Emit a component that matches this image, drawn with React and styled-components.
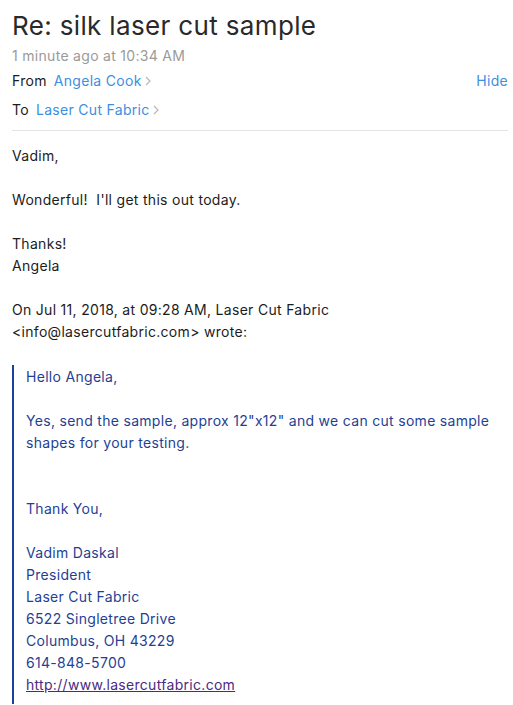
import React from 'react';
import styled, { createGlobalStyle } from 'styled-components';

const GlobalStyle = createGlobalStyle`
    body {
        margin: 0;
        background: #ffffff;
        font-family: Inter, "Helvetica Neue", "Liberation Sans", sans-serif;
    }
`;

const Page = styled.div`
    padding: 8px 5px 0 12px;
    color: #1c1c1c;
    letter-spacing: 0.3px;
`;

const Subject = styled.h1`
    margin: 0;
    font-size: 26px;
    font-weight: 400;
    line-height: 36px;
    color: #2a2a2a;
    letter-spacing: 0.35px;
`;

const Stamp = styled.div`
    font-size: 14px;
    color: #9a9a9a;
    line-height: 20px;
    margin-top: 2px;
`;

const HeaderRow = styled.div`
    display: flex;
    align-items: center;
    justify-content: space-between;
    height: 29px;
    font-size: 14px;
`;

const Field = styled.div`
    display: flex;
    align-items: center;
    gap: 7px;
`;

const Label = styled.span`
    color: #1c1c1c;
`;

const Contact = styled.span`
    color: #3d8fe0;
    display: inline-flex;
    align-items: center;
    gap: 3px;
`;

const Hide = styled.span`
    color: #3d8fe0;
`;

const Divider = styled.hr`
    border: none;
    border-top: 1px solid #e4e4e4;
    margin: 6px 0 0 0;
`;

const Body = styled.div`
    font-size: 14px;
    line-height: 22px;
    padding-top: 14px;
`;

const Para = styled.p`
    margin: 0 0 ${p => p.$gap ?? 22}px 0;
`;

const Quote = styled.blockquote`
    margin: 22px 0 0 0;
    padding: 1px 0 0 12px;
    border-left: 2px solid #1e3f9c;
    color: #1f3f94;
    min-height: 338px;
`;

const Link = styled.a`
    color: #4b2a82;
    text-decoration: underline;
`;

const Chevron = () => (
    <svg width="6" height="10" viewBox="0 0 6 10">
        <path d="M1 1l4 4-4 4" fill="none" stroke="#b8b8b8" strokeWidth="1.2" />
    </svg>
);

export default function App() {
    return (
        <Page>
            <GlobalStyle />
            <Subject>Re: silk laser cut sample</Subject>
            <Stamp>1 minute ago at 10:34 AM</Stamp>
            <HeaderRow>
                <Field>
                    <Label>From</Label>
                    <Contact>Angela Cook <Chevron /></Contact>
                </Field>
                <Hide>Hide</Hide>
            </HeaderRow>
            <HeaderRow>
                <Field>
                    <Label>To</Label>
                    <Contact>Laser Cut Fabric <Chevron /></Contact>
                </Field>
            </HeaderRow>
            <Divider />
            <Body>
                <Para>Vadim,</Para>
                <Para>Wonderful!&nbsp; I'll get this out today.</Para>
                <Para>Thanks!<br />Angela</Para>
                <Para $gap={0}>On Jul 11, 2018, at 09:28 AM, Laser Cut Fabric<br />&lt;info@lasercutfabric.com&gt; wrote:</Para>
                <Quote>
                    <Para>Hello Angela,</Para>
                    <Para $gap={44}>Yes, send the sample, approx 12"x12" and we can cut some sample shapes for your testing.</Para>
                    <Para>Thank You,</Para>
                    <Para $gap={0}>
                        Vadim Daskal<br />
                        President<br />
                        Laser Cut Fabric<br />
                        6522 Singletree Drive<br />
                        Columbus, OH 43229<br />
                        614-848-5700<br />
                        <Link href="#">http://www.lasercutfabric.com</Link>
                    </Para>
                </Quote>
            </Body>
        </Page>
    );
}
